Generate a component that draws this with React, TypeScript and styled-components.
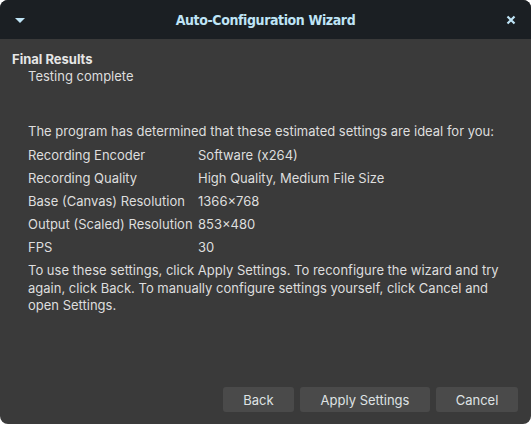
import React from "react";
import styled, { createGlobalStyle } from "styled-components";

const GlobalStyle = createGlobalStyle`
  html, body {
    margin: 0;
    padding: 0;
    background: #ffffff;
  }
  * {
    box-sizing: border-box;
  }
`;

type Setting = {
  label: string;
  value: string;
};

const settings: Setting[] = [
  { label: "Recording Encoder", value: "Software (x264)" },
  { label: "Recording Quality", value: "High Quality, Medium File Size" },
  { label: "Base (Canvas) Resolution", value: "1366×768" },
  { label: "Output (Scaled) Resolution", value: "853×480" },
  { label: "FPS", value: "30" },
];

const Window = styled.div`
  width: 531px;
  height: 424px;
  border-radius: 8px;
  overflow: hidden;
  background: #3a3a3a;
  display: flex;
  flex-direction: column;
  font-family: Inter, "Noto Sans", sans-serif;
  font-size: 13px;
  color: #dedede;
`;

const TitleBar = styled.div`
  height: 39px;
  flex: none;
  background: #1b1f23;
  display: flex;
  align-items: center;
  justify-content: space-between;
  padding: 0 14px 0 14px;
`;

const Title = styled.div`
  font-family: "DejaVu Sans Condensed", "DejaVu Sans", sans-serif;
  font-weight: bold;
  font-size: 14px;
  letter-spacing: -0.4px;
  color: #bfe4f6;
`;

const TitleIcon = styled.svg`
  width: 12px;
  height: 12px;
  display: block;
`;

const Content = styled.div`
  flex: 1;
  display: flex;
  flex-direction: column;
  padding: 12px 13px 12px 12px;
`;

const PageTitle = styled.div`
  font-weight: 700;
  line-height: 17px;
  color: #e6e6e6;
`;

const SubTitle = styled.div`
  padding-left: 16px;
  line-height: 17px;
  margin-bottom: 35px;
`;

const Body = styled.div`
  padding-left: 16px;
  display: flex;
  flex-direction: column;
`;

const Line = styled.div`
  height: 23px;
  line-height: 23px;
  white-space: nowrap;
`;

const Grid = styled.div`
  display: grid;
  grid-template-columns: 170px 1fr;
  grid-auto-rows: 23px;
  align-items: center;
`;

const Note = styled.div`
  margin-top: 4px;
  line-height: 17.5px;
  padding-right: 10px;
`;

const Footer = styled.div`
  margin-top: auto;
  display: flex;
  justify-content: flex-end;
  gap: 6px;
`;

const Button = styled.button<{ $w: number }>`
  width: ${({ $w }) => $w}px;
  height: 25px;
  border: none;
  border-radius: 3px;
  background: #4a4a4a;
  color: #dfe2e4;
  font-family: Inter, "Noto Sans", sans-serif;
  font-size: 13px;
  padding: 0;
`;

export default function App() {
  return (
    <>
      <GlobalStyle />
      <Window>
        <TitleBar>
          <TitleIcon viewBox="0 0 12 12">
            <path d="M1 4 L11 4 L6 9 Z" fill="#bfe4f6" />
          </TitleIcon>
          <Title>Auto-Configuration Wizard</Title>
          <TitleIcon viewBox="0 0 12 12">
            <path d="M2.5 2.5 L9.5 9.5 M9.5 2.5 L2.5 9.5" stroke="#bfe4f6" strokeWidth="2.2" />
          </TitleIcon>
        </TitleBar>
        <Content>
          <PageTitle>Final Results</PageTitle>
          <SubTitle>Testing complete</SubTitle>
          <Body>
            <Line>The program has determined that these estimated settings are ideal for you:</Line>
            <Grid>
              {settings.map((s) => (
                <React.Fragment key={s.label}>
                  <span>{s.label}</span>
                  <span>{s.value}</span>
                </React.Fragment>
              ))}
            </Grid>
            <Note>
              To use these settings, click Apply Settings. To reconfigure the wizard and try again,
              click Back. To manually configure settings yourself, click Cancel and open Settings.
            </Note>
          </Body>
          <Footer>
            <Button $w={71}>Back</Button>
            <Button $w={130}>Apply Settings</Button>
            <Button $w={82}>Cancel</Button>
          </Footer>
        </Content>
      </Window>
    </>
  );
}
